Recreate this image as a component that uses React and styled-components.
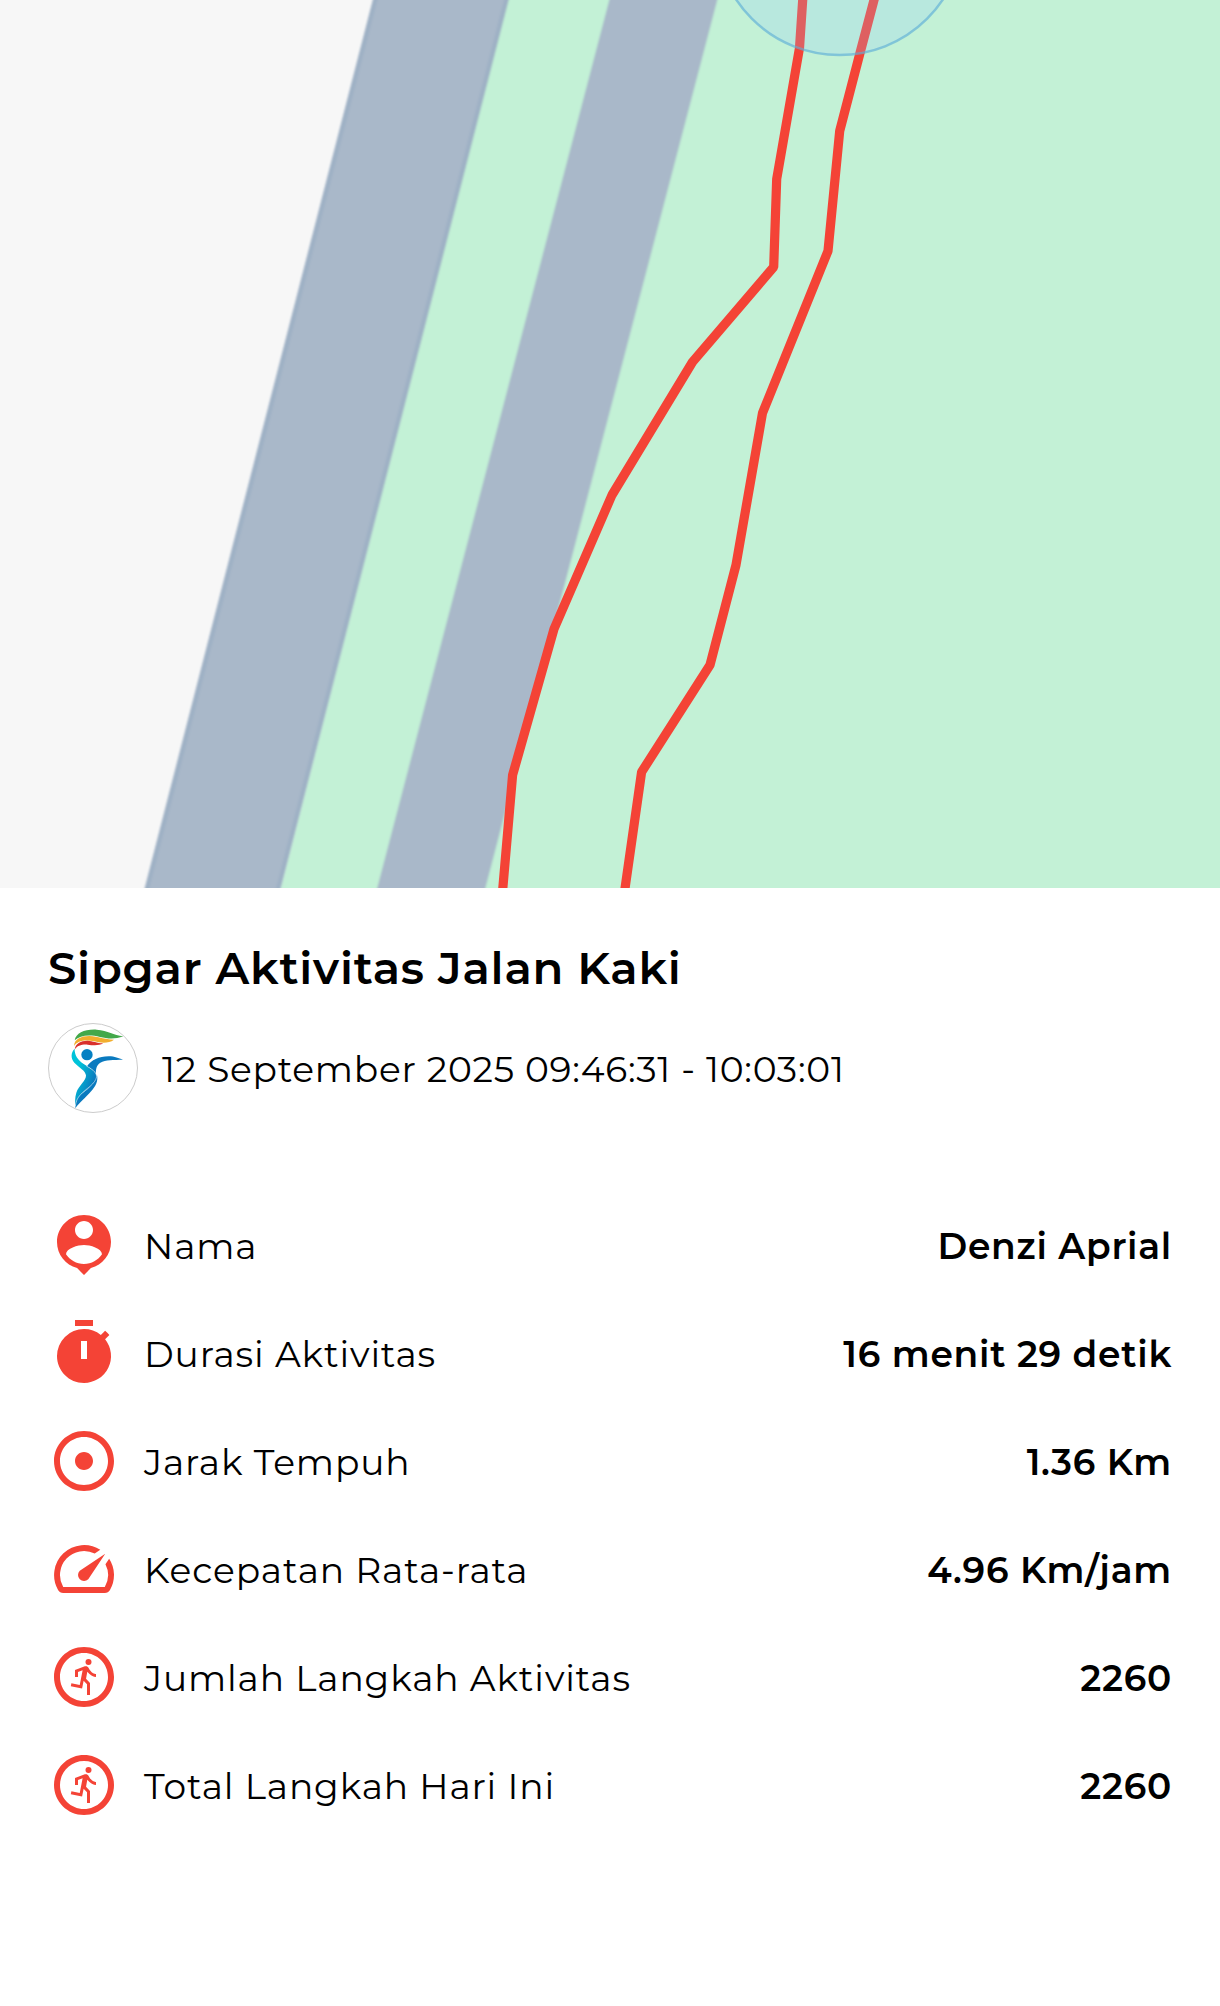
import React from 'react'
import styled, { createGlobalStyle } from 'styled-components'
import { MdTimer, MdAdjust, MdSpeed, MdOutlineRunCircle } from 'react-icons/md'

const GlobalStyle = createGlobalStyle`
  * {
    box-sizing: border-box;
  }

  body {
    margin: 0;
    background: #fff;
    color: #000;
    font-family: Montserrat, Inter, sans-serif;
    letter-spacing: 0.75px;
  }
`

const Page = styled.main`
  width: 100%;
  min-height: 2006px;
  background: #fff;
`

const MapView = styled.svg`
  display: block;
  width: 100%;
  height: 888px;
  background: #f7f7f7;
`

const Details = styled.section`
  padding: 48px;
`

const Title = styled.h1`
  margin: 0;
  font-size: 45px;
  font-weight: 600;
  line-height: 63px;
  letter-spacing: 0.79px;
`

const Header = styled.div`
  display: flex;
  align-items: center;
  gap: 24px;
  margin-top: 24px;
`

const Avatar = styled.div`
  flex: none;
  width: 90px;
  height: 90px;
  border: 1px solid #ccc;
  border-radius: 50%;
  overflow: hidden;

  svg {
    display: block;
    width: 100%;
    height: 100%;
  }
`

const DateText = styled.p`
  margin: 0;
  padding-top: 2px;
  font-size: 36px;
  font-weight: 400;
  line-height: 44px;
`

const StatList = styled.div`
  margin-top: 78px;
`

const StatRow = styled.div`
  display: flex;
  align-items: center;
  height: 108px;

  > svg {
    flex: none;
    width: 72px;
    height: 72px;
    color: #f44336;
  }
`

const Label = styled.span`
  margin-left: 24px;
  padding-top: 2px;
  font-size: 36px;
  font-weight: 400;
  line-height: 44px;
  letter-spacing: 0.87px;
`

const Value = styled(Label)`
  margin-left: auto;
  font-weight: 600;
  letter-spacing: 0.75px;
`

const PersonPin = () => (
  <svg viewBox="0 0 24 24" fill="currentColor">
    <path d="M12 2c-4.97 0-9 4.03-9 9 0 4.17 2.84 7.67 6.69 8.69L12 22l2.31-2.31C18.16 18.67 21 15.17 21 11c0-4.97-4.03-9-9-9zm0 2c1.66 0 3 1.34 3 3s-1.34 3-3 3-3-1.34-3-3 1.34-3 3-3zm0 14.3c-2.5 0-4.71-1.28-6-3.22.03-1.99 4-3.08 6-3.08 1.99 0 5.97 1.09 6 3.08-1.29 1.94-3.5 3.22-6 3.22z" />
  </svg>
)

const SipgarLogo = () => (
  <svg viewBox="57 72 264 264">
    <defs>
      <linearGradient id="body" gradientUnits="userSpaceOnUse" x1="128" y1="200" x2="200" y2="225">
        <stop offset="0.2" stopColor="#00c3d9" />
        <stop offset="1" stopColor="#0a78bd" />
      </linearGradient>
    </defs>
    <path fill="#43a84a" d="M134 121C138 99 165 87 200 89C235 91 250 106 280 109C254 119 232 116 210 111C178 103 150 106 134 121Z" />
    <path fill="#f2ae2e" d="M132 138C133 118 152 108 178 108C206 110 222 118 252 119C236 131 213 129 193 124C165 118 142 122 132 138Z" />
    <path fill="#d9302c" d="M134 149C136 131 152 122 172 122C190 123 199 129 220 130C205 138 190 136 173 134C154 133 142 137 134 149Z" />
    <circle cx="171" cy="164" r="17" fill="#0580c3" />
    <path fill="#0a7abf" d="M171 199C185 180 206 169 236 169C255 169 265 175 279 179C250 180 227 178 211 188C199 196 197 208 198 222C191 211 181 205 171 199Z" />
    <path fill="url(#body)" d="M134 146C122 158 122 175 133 188C148 204 166 211 168 226C169 242 146 257 139 278C134 293 136 307 135 320C141 296 155 280 172 267C190 254 202 240 200 227C196 211 177 203 161 192C143 180 133 164 134 146Z" />
    <path fill="#0a7abf" d="M201 225C205 243 197 259 184 273C166 294 149 306 136 325C136 308 141 297 151 286C168 269 194 256 201 225Z" />
    <path fill="none" stroke="#fff" strokeWidth="1.6" d="M169 198C184 206 199 215 200 230C196 252 168 266 152 283C142 294 138 304 136 318" />
  </svg>
)

const stats = [
  { icon: PersonPin, label: 'Nama', value: 'Denzi Aprial' },
  { icon: MdTimer, label: 'Durasi Aktivitas', value: '16 menit 29 detik' },
  { icon: MdAdjust, label: 'Jarak Tempuh', value: '1.36 Km' },
  { icon: MdSpeed, label: 'Kecepatan Rata-rata', value: '4.96 Km/jam' },
  { icon: MdOutlineRunCircle, label: 'Jumlah Langkah Aktivitas', value: '2260' },
  { icon: MdOutlineRunCircle, label: 'Total Langkah Hari Ini', value: '2260' },
]

const RouteMap = () => (
  <MapView viewBox="0 0 1220 888" preserveAspectRatio="none">
    <defs>
      <filter id="soft" filterUnits="userSpaceOnUse" x="-40" y="-40" width="1300" height="970">
        <feGaussianBlur stdDeviation="1.3" />
      </filter>
    </defs>
    {/* tile layer: park and the two roads, run past the edges so the blur stays outside */}
    <g filter="url(#soft)">
      <path fill="#c3f1d6" d="M513.1 -20H1260V920H272.800Z" />
      <path fill="#a9b8c9" d="M378.100 -20H513.600L275.500 908H139.800Z" />
      <path fill="none" stroke="#9fb1c5" strokeWidth="4.500" d="M380.300 -20L142 908M511.400 -20L273.300 908" />
      <path fill="#a9b8c9" d="M614.500 -20H722.500L480.200 908H372Z" />
    </g>
    <g fill="none" stroke="#f44336" strokeWidth="9.200" strokeLinejoin="bevel">
      <path d="M803 -10L802.700 0L799.500 48L776.700 179L773.700 267L692.500 362L612 495L554 629L512.600 775L502.500 892" />
      <path d="M877 -10L874 0L860 53L839.700 131L828 251L762.500 413L736 565L710 665L641.600 772L624.500 892" />
    </g>
    <circle cx="839.500" cy="-69" r="124" fill="#90caf9" fillOpacity="0.22" />
    <circle cx="839.500" cy="-69" r="124" fill="none" stroke="#5fafd7" strokeOpacity="0.65" strokeWidth="2.500" />
  </MapView>
)

const App = () => {
  return (
    <Page>
      <GlobalStyle />
      <RouteMap />
      <Details>
        <Title>Sipgar Aktivitas Jalan Kaki</Title>
        <Header>
          <Avatar>
            <SipgarLogo />
          </Avatar>
          <DateText>12 September 2025 09:46:31 - 10:03:01</DateText>
        </Header>
        <StatList>
          {stats.map(({ icon: Icon, label, value }) => (
            <StatRow key={label}>
              <Icon />
              <Label>{label}</Label>
              <Value>{value}</Value>
            </StatRow>
          ))}
        </StatList>
      </Details>
    </Page>
  )
}

export default App
